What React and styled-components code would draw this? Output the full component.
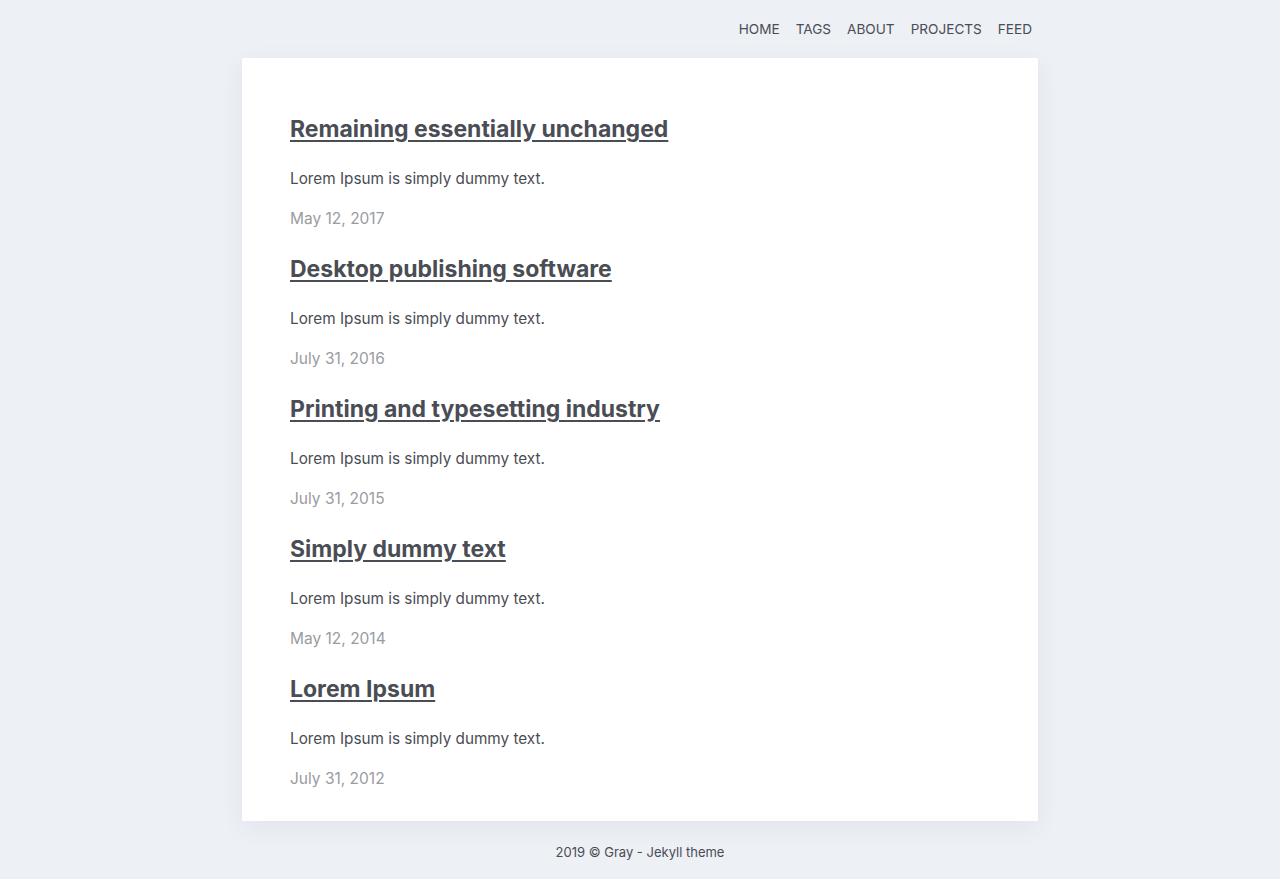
import React from 'react'
import styled, { createGlobalStyle } from 'styled-components'

const posts = [
  { title: 'Remaining essentially unchanged', date: 'May 12, 2017' },
  { title: 'Desktop publishing software', date: 'July 31, 2016' },
  { title: 'Printing and typesetting industry', date: 'July 31, 2015' },
  { title: 'Simply dummy text', date: 'May 12, 2014' },
  { title: 'Lorem Ipsum', date: 'July 31, 2012' },
]

const links = ['Home', 'Tags', 'About', 'Projects', 'Feed']

export default function App() {
  return (
    <>
      <Global />
      <Page>
        <Nav>
          {links.map((l) => (
            <NavLink key={l} href="#">{l}</NavLink>
          ))}
        </Nav>
        <Card>
          {posts.map((p) => (
            <Post key={p.title}>
              <Title><a href="#">{p.title}</a></Title>
              <Excerpt>Lorem Ipsum is simply dummy text.</Excerpt>
              <PostDate>{p.date}</PostDate>
            </Post>
          ))}
        </Card>
        <Footer>2019 © Gray - Jekyll theme</Footer>
      </Page>
    </>
  )
}

const Global = createGlobalStyle`
  html, body {
    margin: 0;
    background: #edf0f5;
    font-family: Inter, "Noto Sans", sans-serif;
    color: #4a4d54;
  }
`

const Page = styled.div`
  width: 796px;
  margin: 0 auto;
`

const Nav = styled.nav`
  height: 58px;
  display: flex;
  justify-content: flex-end;
  align-items: center;
  gap: 16px;
  padding-right: 6px;
`

const NavLink = styled.a`
  font-size: 13.6px;
  text-transform: uppercase;
  color: #4a4d54;
  text-decoration: none;
`

const Card = styled.main`
  background: #fff;
  padding: 55px 48px 30px;
  box-shadow: 0 6px 24px rgba(30, 40, 60, 0.06);
`

const Post = styled.article`
  & + & {
    margin-top: 22px;
  }
`

const Title = styled.h2`
  margin: 0;
  font-size: 23px;
  line-height: 32px;
  font-weight: 700;

  a {
    color: #4a4d54;
    text-decoration: underline;
    text-underline-offset: 3px;
    text-decoration-thickness: 2px;
  }
`

const Excerpt = styled.p`
  margin: 22px 0 0;
  font-size: 15.3px;
  line-height: 24px;
`

const PostDate = styled.div`
  margin-top: 16px;
  font-size: 15.5px;
  line-height: 24px;
  color: #999ca1;
`

const Footer = styled.footer`
  text-align: center;
  font-size: 13px;
  line-height: 20px;
  padding: 21px 0;
  color: #4a4d54;
`
